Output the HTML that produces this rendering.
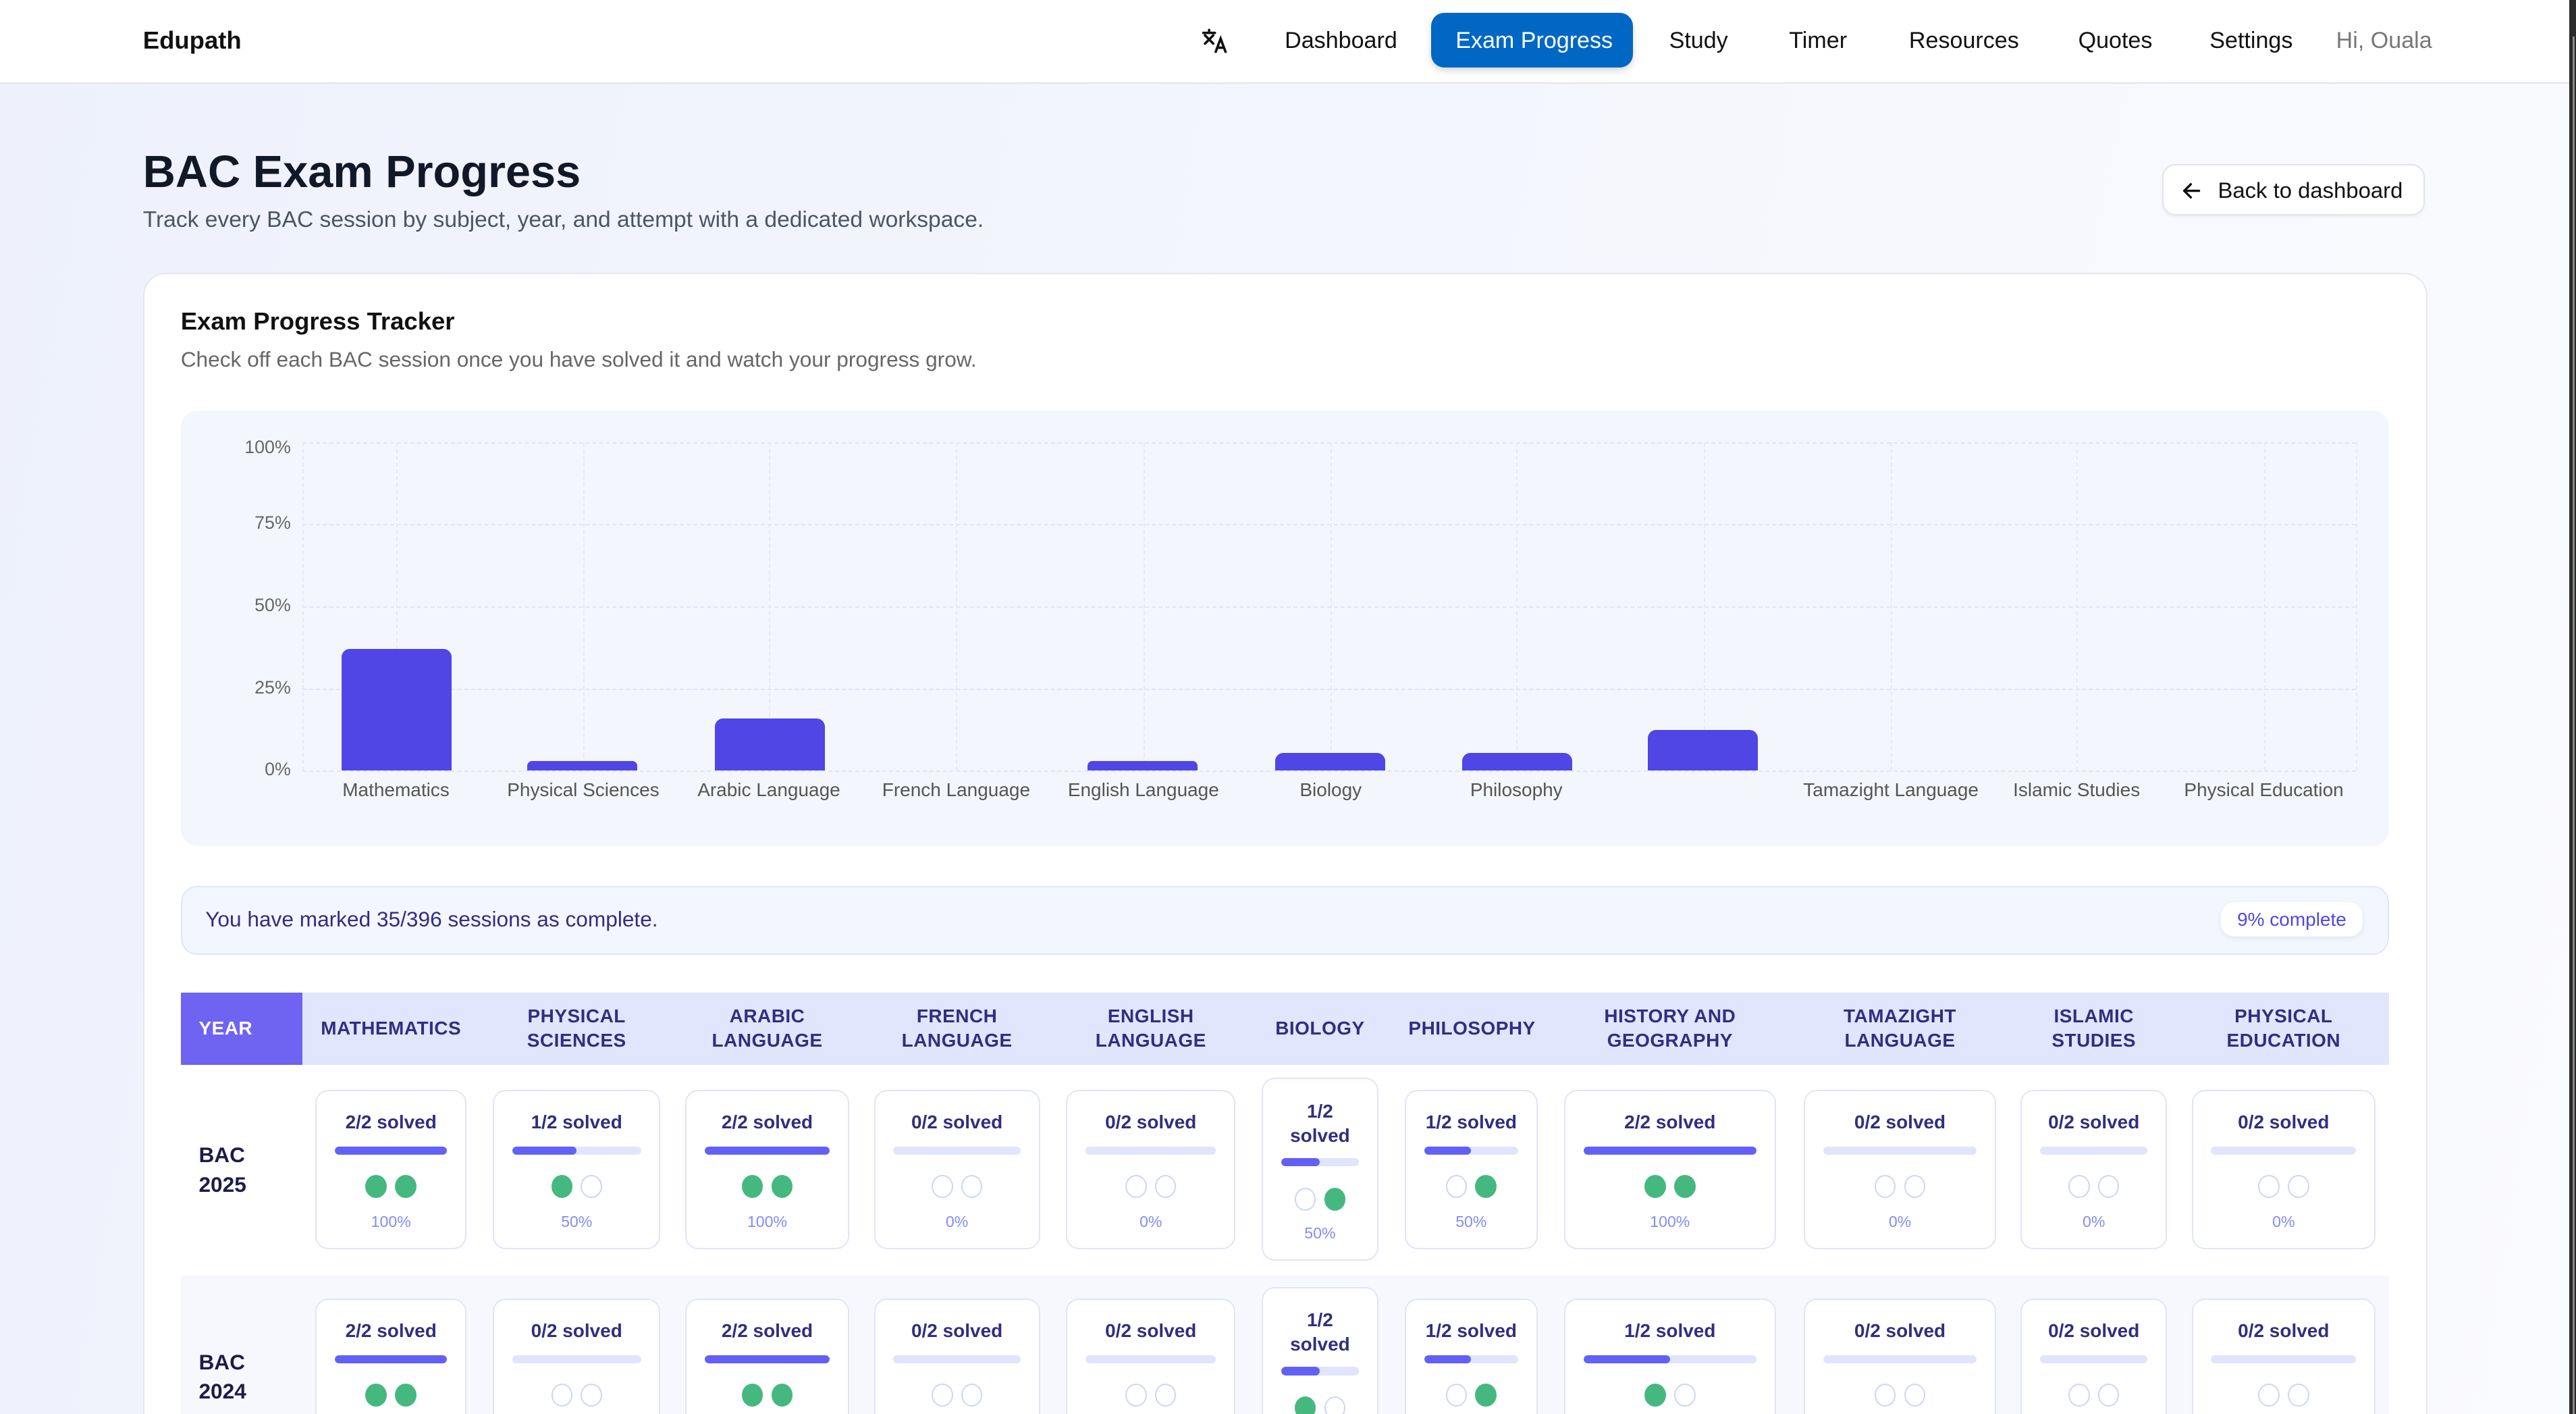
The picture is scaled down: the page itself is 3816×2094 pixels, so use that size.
<!DOCTYPE html>
<html><head><meta charset="utf-8">
<style>
html,body{margin:0;padding:0;width:3816px;height:2094px;overflow:hidden;background:#fff}
#w{zoom:2.43367;width:1568px;height:861px;position:relative;overflow:hidden;font-family:"Liberation Sans",sans-serif;background:linear-gradient(100deg,#eef1fc 0%,#f5f7fd 60%,#fafbfe 100%)}
.a{position:absolute}
nav{position:absolute;left:0;top:0;width:1564px;height:50px;background:#fff;border-bottom:1px solid #e4e4e7}
.ni{position:absolute;top:17px;font-size:14px;color:#111;white-space:nowrap}
.card{position:absolute;left:87px;top:166px;width:1389px;height:720px;background:#fff;border:1px solid #e5e7eb;border-radius:14px}
.gl{position:absolute;border-top:1px dashed #e0e4f6;left:184px;width:1250px;height:0}
.vl{position:absolute;border-left:1px dashed #e6e9f7;top:269px;height:200px;width:0}
.yl{position:absolute;width:60px;left:117px;text-align:right;font-size:11px;color:#666}
.bar{position:absolute;background:#4f46e5;border-radius:5px 5px 0 0;width:67px}
.xl{position:absolute;top:474px;width:140px;text-align:center;font-size:11.5px;color:#555;white-space:nowrap}
.th{position:absolute;top:604px;height:44px;display:flex;align-items:center;justify-content:center;text-align:center;font-size:11.5px;font-weight:bold;color:#312e81;line-height:15px;letter-spacing:.2px}
.c{position:absolute;background:#fff;border:1px solid #e0e4fa;border-radius:8px;box-sizing:border-box}
.c .t{position:absolute;top:12px;left:0;right:0;text-align:center;font-size:11.5px;font-weight:bold;color:#312e81;line-height:14px}
.c .b{position:absolute;top:34px;left:11px;right:11px;height:5px;border-radius:3px;background:#e0e5fb;overflow:hidden}
.c .b i{display:block;height:100%;background:#6360f5;border-radius:3px}
.c .d{position:absolute;top:51px;left:0;right:0;display:flex;justify-content:center;gap:5px}
.c .d s{display:block;width:13px;height:14px;border-radius:50%;box-sizing:border-box;border:1px solid #cfd5f7;background:#fff}
.c .d s.f{background:#45b880;border-color:#45b880}
.c .p{position:absolute;top:74px;left:0;right:0;text-align:center;font-size:9.5px;color:#818cf8}
.c.bi .t{top:12px;line-height:15px}
.c.bi .b{top:48px}
.c.bi .d{top:66px}
.c.bi .p{top:88px}
.yr{position:absolute;left:121px;font-size:13px;font-weight:bold;color:#1e1b4b;line-height:18px}
</style></head><body><div id="w">
<nav>
<div class="a" style="left:87px;top:16px;font-size:15px;font-weight:bold;color:#111">Edupath</div>
<svg class="a" style="left:731px;top:16px" width="17" height="17" viewBox="0 0 17 17" fill="none" stroke="#111" stroke-width="1.5" stroke-linecap="round"><path d="M1.5 4h7M5 2.2v.6M2.5 5.5l5 5M7.5 5.5l-5 5M9 15.5l3-8 3 8M10 13h4"/></svg>
<div class="ni" style="left:782px">Dashboard</div>
<div class="a" style="left:871px;top:8px;width:123px;height:33px;background:#0067c5;border-radius:8px;box-shadow:0 2px 4px rgba(0,0,0,.15)"></div>
<div class="ni" style="left:886px;color:#fff">Exam Progress</div>
<div class="ni" style="left:1016px">Study</div>
<div class="ni" style="left:1089px">Timer</div>
<div class="ni" style="left:1162px">Resources</div>
<div class="ni" style="left:1265px">Quotes</div>
<div class="ni" style="left:1345px">Settings</div>
<div class="ni" style="left:1422px;color:#777">Hi, Ouala</div>
</nav>
<div class="a" style="left:1564px;top:0;width:4px;height:861px;background:#2b2b2b"></div>
<div class="a" style="left:1566px;top:22px;width:1px;height:839px;background:#888"></div>

<div class="a" style="left:87px;top:89px;font-size:27.4px;font-weight:bold;color:#111827">BAC Exam Progress</div>
<div class="a" style="left:87px;top:126px;font-size:13.8px;color:#4b5563">Track every BAC session by subject, year, and attempt with a dedicated workspace.</div>
<div class="a" style="left:1316px;top:100px;width:160px;height:31px;box-sizing:border-box;background:#fff;border:1px solid #e3e4e8;border-radius:8px;box-shadow:0 1px 2px rgba(0,0,0,.05)"></div>
<svg class="a" style="left:1328px;top:110px" width="12" height="12" viewBox="0 0 12 12" fill="none" stroke="#111" stroke-width="1.4" stroke-linecap="round" stroke-linejoin="round"><path d="M10.5 6h-9M5.5 2L1.5 6l4 4"/></svg>
<div class="a" style="left:1350px;top:108px;font-size:13.5px;color:#111">Back to dashboard</div>

<div class="card"></div>
<div class="a" style="left:110px;top:187px;font-size:15px;font-weight:bold;color:#111">Exam Progress Tracker</div>
<div class="a" style="left:110px;top:211px;font-size:13px;color:#666">Check off each BAC session once you have solved it and watch your progress grow.</div>

<div class="a" style="left:110px;top:250px;width:1344px;height:265px;background:#f4f6fd;border-radius:10px"></div>
<div class="gl" style="top:269px"></div><div class="gl" style="top:319px"></div><div class="gl" style="top:369px"></div><div class="gl" style="top:419px"></div><div class="gl" style="top:469px"></div>
<div class="vl" style="left:184px"></div><div class="vl" style="left:241px"></div><div class="vl" style="left:355px"></div><div class="vl" style="left:468px"></div><div class="vl" style="left:582px"></div><div class="vl" style="left:696px"></div><div class="vl" style="left:810px"></div><div class="vl" style="left:923px"></div><div class="vl" style="left:1037px"></div><div class="vl" style="left:1151px"></div><div class="vl" style="left:1264px"></div><div class="vl" style="left:1378px"></div><div class="vl" style="left:1434px"></div>
<div class="yl" style="top:266px">100%</div><div class="yl" style="top:312px">75%</div><div class="yl" style="top:362px">50%</div><div class="yl" style="top:412px">25%</div><div class="yl" style="top:462px">0%</div>
<div class="bar" style="left:208px;top:395px;height:74px"></div>
<div class="bar" style="left:321px;top:463px;height:6px;border-radius:3px 3px 0 0"></div>
<div class="bar" style="left:435px;top:437px;height:32px"></div>
<div class="bar" style="left:662px;top:463px;height:6px;border-radius:3px 3px 0 0"></div>
<div class="bar" style="left:776px;top:458px;height:11px"></div>
<div class="bar" style="left:890px;top:458px;height:11px"></div>
<div class="bar" style="left:1003px;top:444px;height:25px"></div>
<div class="xl" style="left:171px">Mathematics</div><div class="xl" style="left:285px">Physical Sciences</div><div class="xl" style="left:398px">Arabic Language</div><div class="xl" style="left:512px">French Language</div><div class="xl" style="left:626px">English Language</div><div class="xl" style="left:740px">Biology</div><div class="xl" style="left:853px">Philosophy</div><div class="xl" style="left:1081px">Tamazight Language</div><div class="xl" style="left:1194px">Islamic Studies</div><div class="xl" style="left:1308px">Physical Education</div>

<div class="a" style="left:110px;top:539px;width:1344px;height:42px;box-sizing:border-box;background:#f3f6fe;border:1px solid #e0e6fa;border-radius:10px"></div>
<div class="a" style="left:125px;top:552px;font-size:13px;color:#312e81">You have marked 35/396 sessions as complete.</div>
<div class="a" style="left:1352px;top:549px;width:86px;height:21px;background:#fff;border-radius:8px;box-shadow:0 1px 3px rgba(0,0,0,.08);font-size:11.5px;color:#4f46e5;text-align:center;line-height:21px">9% complete</div>

<div class="a" style="left:110px;top:604px;width:1344px;height:44px;background:#e0e6fc"></div>
<div class="th" style="left:110px;width:74px;background:#6f63f2;color:#fff;justify-content:flex-start;padding-left:11px;box-sizing:border-box">YEAR</div>
<div class="th" style="left:188px;width:100px">MATHEMATICS</div>
<div class="th" style="left:300px;width:102px">PHYSICAL<br>SCIENCES</div>
<div class="th" style="left:417px;width:100px">ARABIC<br>LANGUAGE</div>
<div class="th" style="left:532px;width:101px">FRENCH<br>LANGUAGE</div>
<div class="th" style="left:649px;width:103px">ENGLISH<br>LANGUAGE</div>
<div class="th" style="left:768px;width:71px">BIOLOGY</div>
<div class="th" style="left:850px;width:92px">PHILOSOPHY</div>
<div class="th" style="left:952px;width:129px">HISTORY AND<br>GEOGRAPHY</div>
<div class="th" style="left:1098px;width:117px">TAMAZIGHT<br>LANGUAGE</div>
<div class="th" style="left:1230px;width:89px">ISLAMIC<br>STUDIES</div>
<div class="th" style="left:1334px;width:112px">PHYSICAL<br>EDUCATION</div>

<div class="a" style="left:110px;top:776px;width:1344px;height:90px;background:#f7f8fe"></div>
<div class="yr" style="top:694px">BAC<br>2025</div>
<div class="yr" style="top:820px">BAC<br>2024</div>

<div class="c" style="left:192px;top:663px;width:92px;height:97px"><div class="t">2/2 solved</div><div class="b"><i style="width:100%"></i></div><div class="d"><s class="f"></s><s class="f"></s></div><div class="p">100%</div></div>
<div class="c" style="left:300px;top:663px;width:102px;height:97px"><div class="t">1/2 solved</div><div class="b"><i style="width:50%"></i></div><div class="d"><s class="f"></s><s></s></div><div class="p">50%</div></div>
<div class="c" style="left:417px;top:663px;width:100px;height:97px"><div class="t">2/2 solved</div><div class="b"><i style="width:100%"></i></div><div class="d"><s class="f"></s><s class="f"></s></div><div class="p">100%</div></div>
<div class="c" style="left:532px;top:663px;width:101px;height:97px"><div class="t">0/2 solved</div><div class="b"></div><div class="d"><s></s><s></s></div><div class="p">0%</div></div>
<div class="c" style="left:649px;top:663px;width:103px;height:97px"><div class="t">0/2 solved</div><div class="b"></div><div class="d"><s></s><s></s></div><div class="p">0%</div></div>
<div class="c bi" style="left:768px;top:656px;width:71px;height:111px"><div class="t">1/2<br>solved</div><div class="b"><i style="width:50%"></i></div><div class="d"><s></s><s class="f"></s></div><div class="p">50%</div></div>
<div class="c" style="left:855px;top:663px;width:81px;height:97px"><div class="t">1/2 solved</div><div class="b"><i style="width:50%"></i></div><div class="d"><s></s><s class="f"></s></div><div class="p">50%</div></div>
<div class="c" style="left:952px;top:663px;width:129px;height:97px"><div class="t">2/2 solved</div><div class="b"><i style="width:100%"></i></div><div class="d"><s class="f"></s><s class="f"></s></div><div class="p">100%</div></div>
<div class="c" style="left:1098px;top:663px;width:117px;height:97px"><div class="t">0/2 solved</div><div class="b"></div><div class="d"><s></s><s></s></div><div class="p">0%</div></div>
<div class="c" style="left:1230px;top:663px;width:89px;height:97px"><div class="t">0/2 solved</div><div class="b"></div><div class="d"><s></s><s></s></div><div class="p">0%</div></div>
<div class="c" style="left:1334px;top:663px;width:112px;height:97px"><div class="t">0/2 solved</div><div class="b"></div><div class="d"><s></s><s></s></div><div class="p">0%</div></div>

<div class="c" style="left:192px;top:790px;width:92px;height:97px"><div class="t">2/2 solved</div><div class="b"><i style="width:100%"></i></div><div class="d"><s class="f"></s><s class="f"></s></div><div class="p">100%</div></div>
<div class="c" style="left:300px;top:790px;width:102px;height:97px"><div class="t">0/2 solved</div><div class="b"></div><div class="d"><s></s><s></s></div><div class="p">0%</div></div>
<div class="c" style="left:417px;top:790px;width:100px;height:97px"><div class="t">2/2 solved</div><div class="b"><i style="width:100%"></i></div><div class="d"><s class="f"></s><s class="f"></s></div><div class="p">100%</div></div>
<div class="c" style="left:532px;top:790px;width:101px;height:97px"><div class="t">0/2 solved</div><div class="b"></div><div class="d"><s></s><s></s></div><div class="p">0%</div></div>
<div class="c" style="left:649px;top:790px;width:103px;height:97px"><div class="t">0/2 solved</div><div class="b"></div><div class="d"><s></s><s></s></div><div class="p">0%</div></div>
<div class="c bi" style="left:768px;top:783px;width:71px;height:111px"><div class="t">1/2<br>solved</div><div class="b"><i style="width:50%"></i></div><div class="d"><s class="f"></s><s></s></div><div class="p">50%</div></div>
<div class="c" style="left:855px;top:790px;width:81px;height:97px"><div class="t">1/2 solved</div><div class="b"><i style="width:50%"></i></div><div class="d"><s></s><s class="f"></s></div><div class="p">50%</div></div>
<div class="c" style="left:952px;top:790px;width:129px;height:97px"><div class="t">1/2 solved</div><div class="b"><i style="width:50%"></i></div><div class="d"><s class="f"></s><s></s></div><div class="p">50%</div></div>
<div class="c" style="left:1098px;top:790px;width:117px;height:97px"><div class="t">0/2 solved</div><div class="b"></div><div class="d"><s></s><s></s></div><div class="p">0%</div></div>
<div class="c" style="left:1230px;top:790px;width:89px;height:97px"><div class="t">0/2 solved</div><div class="b"></div><div class="d"><s></s><s></s></div><div class="p">0%</div></div>
<div class="c" style="left:1334px;top:790px;width:112px;height:97px"><div class="t">0/2 solved</div><div class="b"></div><div class="d"><s></s><s></s></div><div class="p">0%</div></div>
</div></body></html>
